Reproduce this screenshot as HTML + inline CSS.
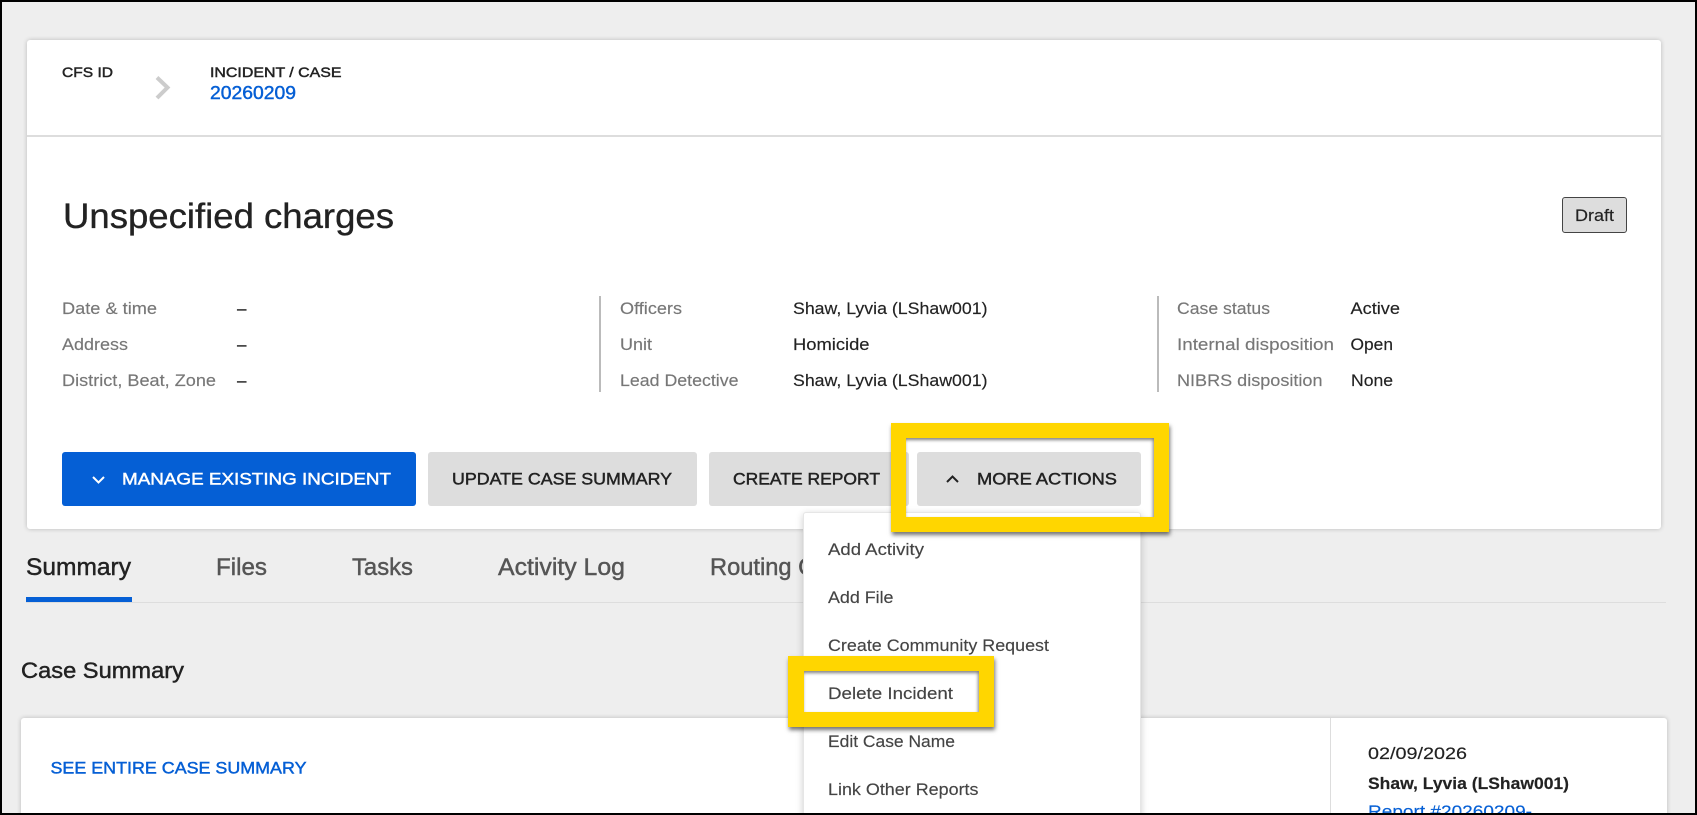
<!DOCTYPE html>
<html lang="en"><head><meta charset="utf-8"><title>Unspecified charges</title>
<style>
html,body{margin:0;padding:0;width:1697px;height:815px;overflow:hidden;background:#eee}
#root{position:relative;width:1697px;height:815px;overflow:hidden;background:#eee}
.a{position:absolute;box-sizing:border-box}
.card{background:#fff;border-radius:3px;box-shadow:0 0 5px rgba(0,0,0,.22)}
.btn{background:#ddd;border-radius:3px}
svg{position:absolute;left:0;top:0;width:1697px;height:815px;overflow:visible}
text{font-family:"Liberation Sans",Arial,sans-serif;font-size:17px;fill:#222;stroke:#222;stroke-width:.15px}
.l{fill:#777;stroke:#777}
.m{stroke:currentColor;stroke-width:.45px}
.g{fill:#444;stroke:#444}
.frame{border-style:solid;border-color:#ffd600;box-shadow:1px 3px 4px rgba(0,0,0,.55),inset -1px 2px 3px rgba(0,0,0,.5)}
.edge{position:absolute;left:0;top:0;width:1697px;height:815px;border:2px solid #000;box-sizing:border-box;pointer-events:none}
</style></head><body><div id="root">

<div class="a card" style="left:27px;top:40px;width:1634px;height:489px"></div>
<div class="a" style="left:27px;top:135px;width:1634px;height:2px;background:#ddd"></div>
<div class="a" style="left:599px;top:296px;width:2px;height:96px;background:#bbb"></div>
<div class="a" style="left:1157px;top:296px;width:2px;height:96px;background:#bbb"></div>
<div class="a" style="left:62px;top:452px;width:354px;height:54px;background:#055fd5;border-radius:3px"></div>
<div class="a btn" style="left:428px;top:452px;width:269px;height:54px"></div>
<div class="a btn" style="left:709px;top:452px;width:200px;height:54px"></div>
<div class="a btn" style="left:917px;top:452px;width:224px;height:54px"></div>
<div class="a" style="left:1562px;top:197px;width:65px;height:36px;background:#ddd;border:1.5px solid #444;border-radius:3px"></div>
<div class="a" style="left:26px;top:602px;width:1640px;height:1px;background:#ddd"></div>
<div class="a" style="left:26px;top:597px;width:106px;height:5px;background:#055fd5"></div>
<div class="a card" style="left:21px;top:718px;width:1646px;height:120px"></div>
<div class="a" style="left:1330px;top:718px;width:1px;height:97px;background:#ddd"></div>

<svg viewBox="0 0 1697 815">
<text x="62" y="77" style="font-size:14px;color:#222" textLength="51" lengthAdjust="spacingAndGlyphs" class="m">CFS ID</text>
<path d="M157 77.5L167.5 87.5L157 98" fill="none" stroke="#ccc" stroke-width="4"/>
<text x="210" y="77" style="font-size:14px;color:#222" textLength="131.5" lengthAdjust="spacingAndGlyphs" class="m">INCIDENT / CASE</text>
<text x="210" y="99" style="font-size:18px;fill:#055fd5;color:#055fd5" textLength="86" lengthAdjust="spacingAndGlyphs" class="m">20260209</text>
<text x="63" y="228" style="font-size:35px;stroke-width:.35px" textLength="331" lengthAdjust="spacingAndGlyphs">Unspecified charges</text>
<text x="1575" y="221" textLength="39" lengthAdjust="spacingAndGlyphs">Draft</text>

<text class="l" x="62" y="314" textLength="95" lengthAdjust="spacingAndGlyphs">Date &amp; time</text>
<text class="l" x="62" y="350" textLength="66" lengthAdjust="spacingAndGlyphs">Address</text>
<text class="l" x="62" y="386" textLength="154" lengthAdjust="spacingAndGlyphs">District, Beat, Zone</text>
<text x="237" y="314" textLength="9.5" lengthAdjust="spacingAndGlyphs">–</text>
<text x="237" y="350" textLength="9.5" lengthAdjust="spacingAndGlyphs">–</text>
<text x="237" y="386" textLength="9.5" lengthAdjust="spacingAndGlyphs">–</text>

<text class="l" x="620" y="314" textLength="62" lengthAdjust="spacingAndGlyphs">Officers</text>
<text class="l" x="620" y="350" textLength="32" lengthAdjust="spacingAndGlyphs">Unit</text>
<text class="l" x="620" y="386" textLength="118.5" lengthAdjust="spacingAndGlyphs">Lead Detective</text>
<text x="793" y="314" textLength="194.5" lengthAdjust="spacingAndGlyphs">Shaw, Lyvia (LShaw001)</text>
<text x="793" y="350" textLength="76.5" lengthAdjust="spacingAndGlyphs">Homicide</text>
<text x="793" y="386" textLength="194.5" lengthAdjust="spacingAndGlyphs">Shaw, Lyvia (LShaw001)</text>

<text class="l" x="1177" y="314" textLength="93" lengthAdjust="spacingAndGlyphs">Case status</text>
<text class="l" x="1177" y="350" textLength="157" lengthAdjust="spacingAndGlyphs">Internal disposition</text>
<text class="l" x="1177" y="386" textLength="145.5" lengthAdjust="spacingAndGlyphs">NIBRS disposition</text>
<text x="1350.5" y="314" textLength="49.5" lengthAdjust="spacingAndGlyphs">Active</text>
<text x="1350.5" y="350" textLength="42.5" lengthAdjust="spacingAndGlyphs">Open</text>
<text x="1351" y="386" textLength="42" lengthAdjust="spacingAndGlyphs">None</text>

<path d="M93 477l5.5 5.5l5.5-5.5" fill="none" stroke="#fff" stroke-width="2"/>
<text x="122" y="484.5" style="font-size:17px;fill:#fff;color:#fff" textLength="269" lengthAdjust="spacingAndGlyphs" class="m">MANAGE EXISTING INCIDENT</text>
<text x="452" y="484.5" style="color:#222" textLength="220" lengthAdjust="spacingAndGlyphs" class="m">UPDATE CASE SUMMARY</text>
<text x="733" y="484.5" style="color:#222" textLength="147" lengthAdjust="spacingAndGlyphs" class="m">CREATE REPORT</text>
<path d="M947 482l5.5-5.5l5.5 5.5" fill="none" stroke="#222" stroke-width="2"/>
<text x="977" y="484.5" style="color:#222" textLength="140" lengthAdjust="spacingAndGlyphs" class="m">MORE ACTIONS</text>

<text x="26" y="575" style="font-size:24px;color:#222" textLength="105" lengthAdjust="spacingAndGlyphs" class="m">Summary</text>
<text x="216" y="575" style="font-size:24px;fill:#555;color:#555" textLength="51" lengthAdjust="spacingAndGlyphs" class="m">Files</text>
<text x="352" y="575" style="font-size:24px;fill:#555;color:#555" textLength="61" lengthAdjust="spacingAndGlyphs" class="m">Tasks</text>
<text x="498" y="575" style="font-size:24px;fill:#555;color:#555" textLength="127" lengthAdjust="spacingAndGlyphs" class="m">Activity Log</text>
<text x="710" y="575" style="font-size:24px;fill:#555;color:#555" textLength="150" lengthAdjust="spacingAndGlyphs" class="m">Routing Chain</text>

<text x="21" y="678" style="font-size:22px;color:#222" textLength="163" lengthAdjust="spacingAndGlyphs" class="m">Case Summary</text>
<text x="50.5" y="773.5" style="font-size:17px;fill:#055fd5;color:#055fd5" textLength="256" lengthAdjust="spacingAndGlyphs" class="m">SEE ENTIRE CASE SUMMARY</text>
<text x="1368" y="759" textLength="99" lengthAdjust="spacingAndGlyphs">02/09/2026</text>
<text x="1368" y="789" style="font-weight:700" textLength="201" lengthAdjust="spacingAndGlyphs">Shaw, Lyvia (LShaw001)</text>
<text x="1368" y="817" style="fill:#055fd5;stroke:#055fd5" textLength="164" lengthAdjust="spacingAndGlyphs">Report #20260209-</text>
</svg>

<div class="a" style="left:803px;top:512px;width:338px;height:320px;background:#fff;border:1px solid #e6e6e6;border-radius:3px;box-shadow:0 2px 8px rgba(0,0,0,.2)"></div>

<svg viewBox="0 0 1697 815">
<text class="g" x="828" y="555" textLength="96" lengthAdjust="spacingAndGlyphs">Add Activity</text>
<text class="g" x="828" y="603" textLength="65.5" lengthAdjust="spacingAndGlyphs">Add File</text>
<text class="g" x="828" y="651" textLength="221" lengthAdjust="spacingAndGlyphs">Create Community Request</text>
<text class="g" x="828" y="699" textLength="125" lengthAdjust="spacingAndGlyphs">Delete Incident</text>
<text class="g" x="828" y="747" textLength="127" lengthAdjust="spacingAndGlyphs">Edit Case Name</text>
<text class="g" x="828" y="795" textLength="150.5" lengthAdjust="spacingAndGlyphs">Link Other Reports</text>
</svg>

<div class="a frame" style="left:891px;top:423px;width:278px;height:109px;border-width:15px"></div>
<div class="a frame" style="left:788px;top:656px;width:206px;height:71px;border-width:15px 15px 15px 16px"></div>

<div class="edge"></div>
</div></body></html>
